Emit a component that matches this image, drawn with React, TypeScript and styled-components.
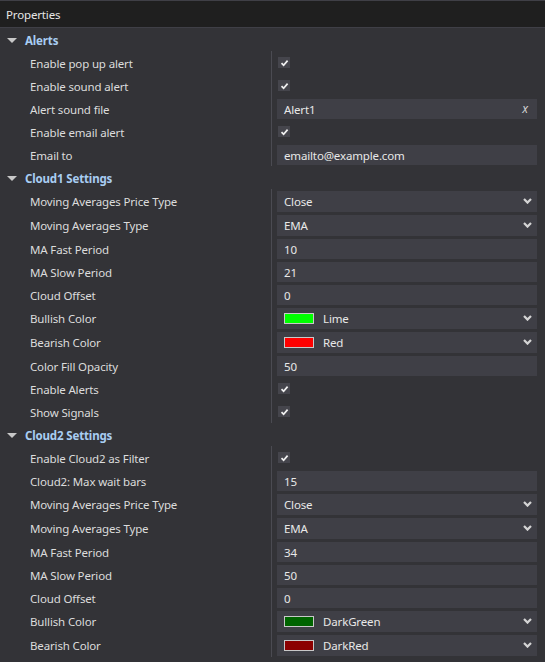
import React from 'react';
import styled, { createGlobalStyle } from 'styled-components';

const GlobalStyle = createGlobalStyle`
  html, body {
    margin: 0;
    padding: 0;
    background: #333337;
  }
  body {
    font-family: 'Segoe UI', 'Noto Sans', 'Open Sans', sans-serif;
    font-size: 11.5px;
    letter-spacing: -0.15px;
    color: #dcdcdc;
  }
`;

const Panel = styled.div`
  width: 545px;
  height: 662px;
  overflow: hidden;
  background: #333337;
`;

const TitleBar = styled.div`
  height: 26px;
  display: flex;
  align-items: center;
  padding-left: 6px;
  background: #1f1f1f;
  border-top: 1px solid #3f3f46;
  border-bottom: 1px solid #3f3f46;
  color: #e6e6e6;
`;

const SectionRow = styled.div`
  height: 23px;
  display: flex;
  align-items: center;
  padding-left: 7px;
  gap: 8px;
  font-weight: 700;
  color: #a8cdf2;
`;

const SectionTitle = styled.span`
  padding-top: 1px;
`;

const Triangle = styled.span`
  width: 0;
  height: 0;
  border-left: 5px solid transparent;
  border-right: 5px solid transparent;
  border-top: 5px solid #c8c8c8;
  margin-top: 1px;
`;

const PropRow = styled.div<{ $tall?: boolean }>`
  height: ${({ $tall }) => ($tall ? 24 : 23)}px;
  display: grid;
  grid-template-columns: 271px 1fr;
`;

const Label = styled.div`
  display: flex;
  align-items: center;
  padding: 1px 0 0 30px;
  white-space: nowrap;
`;

const ValueCell = styled.div`
  display: flex;
  align-items: center;
  border-left: 1px solid #4b4b52;
  padding: 0 8px 0 5px;
`;

const Field = styled.div<{ $h?: number }>`
  flex: 1;
  height: ${({ $h }) => $h ?? 20}px;
  display: flex;
  align-items: center;
  gap: 9px;
  padding: 0 5px 0 7px;
  background: #3f3f46;
  color: #e8e8e8;
`;

const FieldText = styled.span`
  flex: 1;
  padding-top: 1px;
  white-space: nowrap;
`;

const ClearMark = styled.span`
  font-style: italic;
  color: #d0d0d0;
  font-size: 12px;
  margin-right: 4px;
`;

const CheckBox = styled.span`
  width: 12px;
  height: 11px;
  display: flex;
  align-items: center;
  justify-content: center;
  background: #45454c;
  margin-left: 1px;
`;

const Swatch = styled.span<{ $color: string }>`
  width: 28px;
  height: 9px;
  background: ${({ $color }) => $color};
  border: 1px solid #c8c8c8;
`;

const Check = () => (
  <CheckBox>
    <svg width="9" height="8" viewBox="0 0 9 8">
      <path d="M1.5 4.2 L3.6 6.2 L7.6 1.6" fill="none" stroke="#f0f0f0" strokeWidth="1.7" />
    </svg>
  </CheckBox>
);

const Chevron = () => (
  <svg width="9" height="6" viewBox="0 0 9 6">
    <path d="M1 1 L4.5 4.6 L8 1" fill="none" stroke="#d4d4d4" strokeWidth="2.2" />
  </svg>
);

type Prop =
  | { kind: 'check'; label: string }
  | { kind: 'text'; label: string; value: string; clear?: boolean }
  | { kind: 'select'; label: string; value: string; swatch?: string };

type Section = { title: string; props: Prop[] };

const sections: Section[] = [
  {
    title: 'Alerts',
    props: [
      { kind: 'check', label: 'Enable pop up alert' },
      { kind: 'check', label: 'Enable sound alert' },
      { kind: 'text', label: 'Alert sound file', value: 'Alert1', clear: true },
      { kind: 'check', label: 'Enable email alert' },
      { kind: 'text', label: 'Email to', value: 'emailto@example.com' },
    ],
  },
  {
    title: 'Cloud1 Settings',
    props: [
      { kind: 'select', label: 'Moving Averages Price Type', value: 'Close' },
      { kind: 'select', label: 'Moving Averages Type', value: 'EMA' },
      { kind: 'text', label: 'MA Fast Period', value: '10' },
      { kind: 'text', label: 'MA Slow Period', value: '21' },
      { kind: 'text', label: 'Cloud Offset', value: '0' },
      { kind: 'select', label: 'Bullish Color', value: 'Lime', swatch: '#00ff00' },
      { kind: 'select', label: 'Bearish Color', value: 'Red', swatch: '#ff0000' },
      { kind: 'text', label: 'Color Fill Opacity', value: '50' },
      { kind: 'check', label: 'Enable Alerts' },
      { kind: 'check', label: 'Show Signals' },
    ],
  },
  {
    title: 'Cloud2 Settings',
    props: [
      { kind: 'check', label: 'Enable Cloud2 as Filter' },
      { kind: 'text', label: 'Cloud2: Max wait bars', value: '15' },
      { kind: 'select', label: 'Moving Averages Price Type', value: 'Close' },
      { kind: 'select', label: 'Moving Averages Type', value: 'EMA' },
      { kind: 'text', label: 'MA Fast Period', value: '34' },
      { kind: 'text', label: 'MA Slow Period', value: '50' },
      { kind: 'text', label: 'Cloud Offset', value: '0' },
      { kind: 'select', label: 'Bullish Color', value: 'DarkGreen', swatch: '#006400' },
      { kind: 'select', label: 'Bearish Color', value: 'DarkRed', swatch: '#8b0000' },
    ],
  },
];

const Value: React.FC<{ prop: Prop }> = ({ prop }) => {
  if (prop.kind === 'check') return <Check />;
  if (prop.kind === 'text') {
    return (
      <Field>
        <FieldText>{prop.value}</FieldText>
        {prop.clear && <ClearMark>x</ClearMark>}
      </Field>
    );
  }
  return (
    <Field $h={21}>
      {prop.swatch && <Swatch $color={prop.swatch} />}
      <FieldText>{prop.value}</FieldText>
      <Chevron />
    </Field>
  );
};

export default function App() {
  return (
    <>
      <GlobalStyle />
      <Panel>
        <TitleBar>Properties</TitleBar>
        {sections.map((s) => (
          <div key={s.title}>
            <SectionRow>
              <Triangle />
              <SectionTitle>{s.title}</SectionTitle>
            </SectionRow>
            {s.props.map((p, i) => (
              <PropRow key={i} $tall={p.kind === 'select'}>
                <Label>{p.label}</Label>
                <ValueCell>
                  <Value prop={p} />
                </ValueCell>
              </PropRow>
            ))}
          </div>
        ))}
      </Panel>
    </>
  );
}
